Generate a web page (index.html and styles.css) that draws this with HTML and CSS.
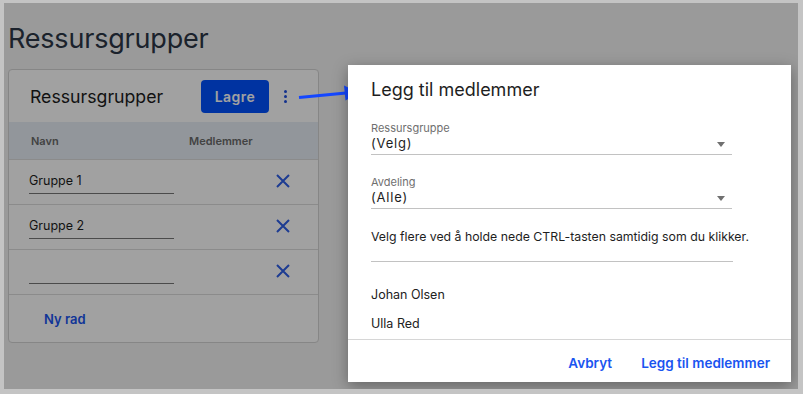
FILE: index.html
```html
<!DOCTYPE html>
<html lang="no">
<head>
    <meta charset="UTF-8">
    <meta name="viewport" content="width=device-width, initial-scale=1.0">
    <title>Ressursgrupper</title>
    <link rel="stylesheet" href="styles.css">
</head>
<body>
    <div class="screen">
        <div class="page">
            <h1>Ressursgrupper</h1>
            <div class="card">
                <div class="card-head">
                    <h2>Ressursgrupper</h2>
                    <button class="btn-save">Lagre</button>
                    <span class="dots"><i></i><i></i><i></i></span>
                </div>
                <div class="row head">
                    <span class="col-name">Navn</span>
                    <span class="col-members">Medlemmer</span>
                </div>
                <div class="row">
                    <div class="col-name"><div class="field">Gruppe 1</div></div>
                    <span class="col-members"></span>
                    <svg class="del" width="14" height="14" viewBox="0 0 14 14"><path d="M1 1L13 13M13 1L1 13" stroke="currentColor" stroke-width="2"/></svg>
                </div>
                <div class="row">
                    <div class="col-name"><div class="field">Gruppe 2</div></div>
                    <span class="col-members"></span>
                    <svg class="del" width="14" height="14" viewBox="0 0 14 14"><path d="M1 1L13 13M13 1L1 13" stroke="currentColor" stroke-width="2"/></svg>
                </div>
                <div class="row">
                    <div class="col-name"><div class="field"></div></div>
                    <span class="col-members"></span>
                    <svg class="del" width="14" height="14" viewBox="0 0 14 14"><path d="M1 1L13 13M13 1L1 13" stroke="currentColor" stroke-width="2"/></svg>
                </div>
                <div class="row foot">
                    <a class="new-row">Ny rad</a>
                </div>
            </div>
        </div>

        <div class="overlay"></div>

        <!-- pil fra menyknappen til dialogen -->
        <svg class="arrow" width="70" height="24" viewBox="0 0 70 24">
            <path d="M3 14.5L50 10" stroke="#1447ff" stroke-width="3" fill="none"/>
            <path d="M48 2.5L63 9.5L49.5 17.5Z" fill="#1447ff"/>
        </svg>

        <div class="modal">
            <h3>Legg til medlemmer</h3>
            <div class="modal-body">
                <label class="select">
                    <span class="label">Ressursgruppe</span>
                    <span class="value">(Velg)</span>
                    <span class="caret"></span>
                </label>
                <label class="select">
                    <span class="label">Avdeling</span>
                    <span class="value">(Alle)</span>
                    <span class="caret"></span>
                </label>
                <div class="hint">Velg flere ved å holde nede CTRL-tasten samtidig som du klikker.</div>
                <ul class="people">
                    <li>Johan Olsen</li>
                    <li>Ulla Red</li>
                </ul>
            </div>
            <div class="modal-foot">
                <button class="link">Avbryt</button>
                <button class="link">Legg til medlemmer</button>
            </div>
        </div>
    </div>
</body>
</html>
```

FILE: styles.css
```css
body { margin: 0; background: #c4c4c4; font-family: Inter, "Noto Sans", sans-serif; color: #222; }
.screen { position: relative; margin: 3px 5px 5px 4px; height: 386px; background: #f4f4f4; overflow: hidden; }
.page { padding: 0 4px; }

h1 { margin: 0; padding-top: 20px; font-size: 27px; font-weight: 400; color: #2c3646; line-height: 32px; letter-spacing: -0.2px; }
.card { width: 311px; margin-top: 14px; background: #fff; border: 1px solid #d4d4d4; border-radius: 4px; box-sizing: border-box; }
.card-head { display: flex; align-items: center; height: 52px; padding-left: 21px; }
.card-head h2 { margin: 0; font-size: 17.7px; font-weight: 400; color: #1c1c1c; flex: 1; }
.btn-save { width: 68px; height: 33px; background: #0052ff; color: #fff; border: none; border-radius: 4px; font: 600 14px Inter, sans-serif; letter-spacing: 0.5px; }
.dots { display: flex; flex-direction: column; gap: 2px; width: 6px; margin: 0 30px 0 13px; align-items: center; }
.dots i { width: 3px; height: 3px; border-radius: 50%; background: #1f4fe0; }

.row { display: flex; align-items: center; height: 44px; border-top: 1px solid #dcdcdc; padding-left: 20px; position: relative; }
.row.head { height: 37px; border-top: none; background: #e8eef5; font-size: 11px; font-weight: 600; color: #6a6a6a; padding-left: 22px; }
.col-name { width: 160px; }
.row.head .col-name { width: 158px; }
.field { width: 145px; height: 22px; border-bottom: 1px solid #777; font-size: 12.5px; line-height: 20px; color: #1e1e1e; }
.del { position: absolute; left: 267px; top: 14px; color: #2f5fe8; }
.row.foot { height: 47px; padding-left: 35px; }
.new-row { font-size: 13px; font-weight: 600; color: #1a55f0; }

.overlay { position: absolute; inset: 0; background: rgba(0, 0, 0, 0.37); }
.arrow { position: absolute; left: 292px; top: 80px; }

.modal { position: absolute; left: 344px; top: 62px; width: 443px; height: 317px; background: #fff; box-shadow: 0 4px 14px rgba(0, 0, 0, 0.35); display: flex; flex-direction: column; }
.modal h3 { margin: 0; padding: 12px 0 0 23px; font-size: 18px; font-weight: 400; color: #1e1e1e; line-height: 26px; }
.modal-body { flex: 1; padding: 0 59px 0 23px; }
.select { position: relative; display: block; border-bottom: 1px solid #c2c2c2; margin-top: 18px; padding-bottom: 2px; }
.select + .select { margin-top: 20px; }
.select .label { display: block; font-size: 11px; color: #6f6f6f; line-height: 14px; }
.select .value { display: block; font-size: 13px; letter-spacing: 0.8px; line-height: 17px; color: #1e1e1e; }
.caret { position: absolute; right: 7px; bottom: 7px; border: 4px solid transparent; border-top: 5px solid #707070; border-bottom: 0; }
.hint { margin-top: 20px; font-size: 12.3px; line-height: 16px; color: #1e1e1e; padding-bottom: 16px; border-bottom: 1px solid #c2c2c2; margin-right: -1px; white-space: nowrap; }
.people { list-style: none; margin: 18px 0 0; padding: 0; font-size: 12.5px; color: #222; }
.people li { height: 29px; line-height: 29px; }
.modal-foot { display: flex; justify-content: flex-end; gap: 29px; height: 43px; border-top: 1px solid #d6d6d6; padding: 3px 21px 0 0; align-items: center; box-sizing: border-box; }
.link { background: none; border: none; padding: 0; font: 600 13.5px Inter, sans-serif; color: #1a55f0; }
```
